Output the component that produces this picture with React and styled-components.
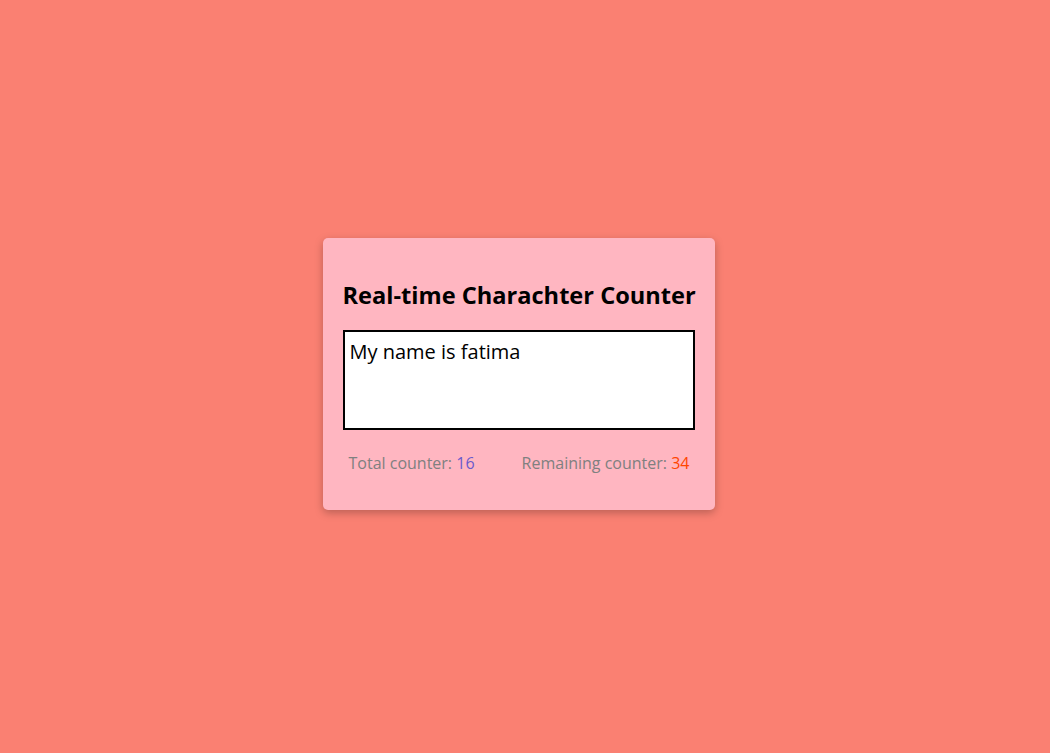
import styled, { createGlobalStyle } from 'styled-components'

const GlobalStyle = createGlobalStyle`
  html, body {
    margin: 0;
    padding: 0;
    background: #fa8072;
  }
  body {
    font-family: "Comic Sans MS", "Open Sans", sans-serif;
  }
`

const Page = styled.div`
  min-height: 100vh;
  box-sizing: border-box;
  display: flex;
  justify-content: center;
  align-items: center;
  padding: 0 13px 6px 0;
`

const Card = styled.div`
  width: 352px;
  padding: 20px 20px 36px;
  background: #ffb6c1;
  border-radius: 5px;
  box-shadow: 0 3px 8px rgba(0, 0, 0, 0.25);
`

const Title = styled.h2`
  margin: 20px 0 18px;
  font-size: 23.6px;
  line-height: 34px;
  font-weight: bold;
  color: #000;
  white-space: nowrap;
`

const TextArea = styled.textarea`
  display: block;
  width: 352px;
  height: 100px;
  box-sizing: border-box;
  border: 2px solid #000;
  padding: 6px 5px 4px;
  margin: 0;
  resize: none;
  background: #fff;
  font-family: inherit;
  font-size: 20px;
  line-height: 28px;
  color: #000;
  outline: none;
`

const Counters = styled.div`
  display: flex;
  justify-content: space-between;
  padding: 0 5px 0 6px;
  margin-top: 22px;
  font-size: 16px;
  line-height: 22px;
  color: #808080;
`

const Value = styled.span`
  color: ${(p) => p.$tone};
`

export default function App() {
  const text = 'My name is fatima'
  const total = 16
  const remaining = 34
  return (
    <>
      <GlobalStyle />
      <Page>
        <Card>
          <Title>Real-time Charachter Counter</Title>
          <TextArea defaultValue={text} spellCheck={false} />
          <Counters>
            <span>
              Total counter: <Value $tone="#6a5acd">{total}</Value>
            </span>
            <span>
              Remaining counter: <Value $tone="#ff4500">{remaining}</Value>
            </span>
          </Counters>
        </Card>
      </Page>
    </>
  )
}
